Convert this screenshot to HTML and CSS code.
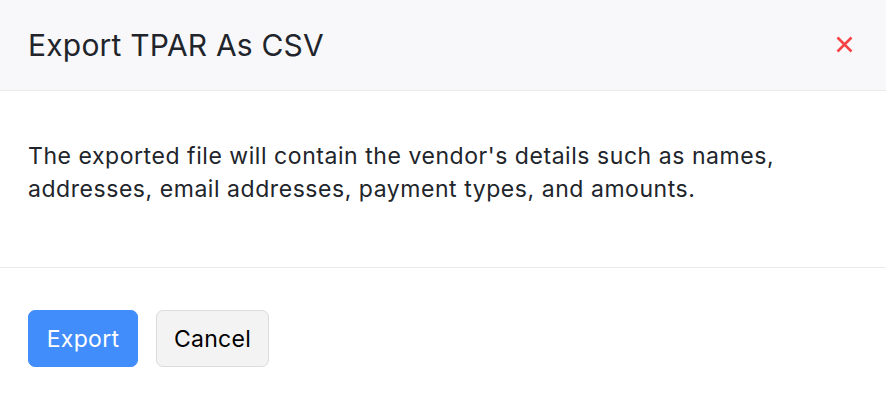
FILE: index.html
```html
<!DOCTYPE html>
<html>
<head>
<meta charset="utf-8">
<link rel="stylesheet" href="styles.css">
</head>
<body>
<div class="modal">
  <div class="modal-header">
    <h2 class="modal-title">Export TPAR As CSV</h2>
    <button class="close-btn" aria-label="Close">
      <svg width="17" height="17" viewBox="0 0 17 17"><path d="M1.5 1.5L15.5 15.5M15.5 1.5L1.5 15.5" stroke="#f74345" stroke-width="2.6" stroke-linecap="butt"/></svg>
    </button>
  </div>
  <div class="modal-body">
    <p>The exported file will contain the vendor's details such as names, addresses, email addresses, payment types, and amounts.</p>
  </div>
  <div class="modal-footer">
    <button class="btn btn-primary">Export</button>
    <button class="btn btn-secondary">Cancel</button>
  </div>
</div>
</body>
</html>
```
FILE: styles.css
```css
* { box-sizing: border-box; }
html, body { margin: 0; padding: 0; background: #fff; }
body { font-family: Inter, "Noto Sans", sans-serif; color: #21252b; }
.modal { width: 886px; }
.modal-header {
  height: 91px;
  background: #f8f8fa;
  border-bottom: 1px solid #ebebeb;
  display: flex;
  align-items: center;
  justify-content: space-between;
  padding: 0 33px 0 28px;
}
.modal-title { margin: 0; font-size: 30px; letter-spacing: 0.2px; font-weight: 400; color: #21252b; }
.close-btn { background: none; border: 0; padding: 0; width: 17px; height: 17px; display: flex; margin-top: -2px; }
.modal-body {
  height: 177px;
  padding: 49px 28px 0 28px;
  border-bottom: 1px solid #ebebeb;
}
.modal-body p { margin: 0; font-size: 23px; letter-spacing: 0.55px; line-height: 33px; color: #21252b; }
.modal-footer { display: flex; gap: 18px; padding: 42px 28px; }
.btn {
  font-family: Inter, "Noto Sans", sans-serif;
  font-size: 23px;
  letter-spacing: 0.3px;
  height: 57px;
  border-radius: 7px;
  padding: 0;
  cursor: pointer;
}
.btn-primary { background: #408dfb; color: #fff; border: 1px solid #408dfb; width: 110px; }
.btn-secondary { background: #f3f3f3; color: #000; border: 1px solid #dcdcdc; width: 113px; }
```
